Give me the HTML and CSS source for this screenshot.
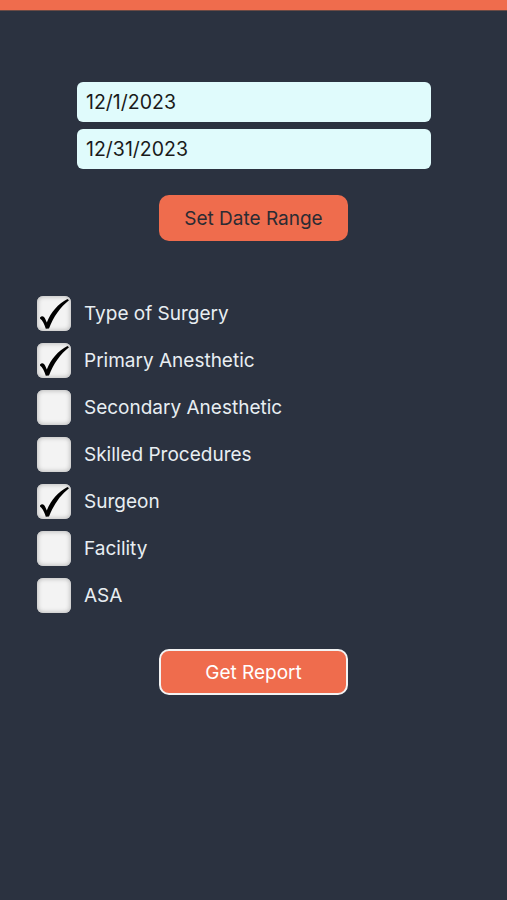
FILE: index.html
```html
<!DOCTYPE html>
<html lang="en">
<head>
    <meta charset="UTF-8">
    <title>Report</title>
    <meta name="viewport" content="width=device-width, initial-scale=1">
    <link rel="stylesheet" href="styles.css">
</head>
<body>
    <div class="topbar"></div>
    <div class="container">
        <div class="dates">
            <input type="text" class="date-input" value="12/1/2023">
            <input type="text" class="date-input" value="12/31/2023">
        </div>
        <button class="btn btn-range">Set Date Range</button>

        <div class="options">
            <label class="option"><span class="box"><svg class="tick" viewBox="0 0 34 34"><path d="M3 20.5C5 18.5 7 19 8.5 22.5L9.8 25.5C14 15 21 7 30.5 2L32 3.2C23.5 10 16.5 19.5 12 31.5L8.8 31.8C7.6 27.5 5.6 23.5 3 21.5Z"/></svg></span> Type of Surgery</label>
            <label class="option"><span class="box"><svg class="tick" viewBox="0 0 34 34"><path d="M3 20.5C5 18.5 7 19 8.5 22.5L9.8 25.5C14 15 21 7 30.5 2L32 3.2C23.5 10 16.5 19.5 12 31.5L8.8 31.8C7.6 27.5 5.6 23.5 3 21.5Z"/></svg></span> Primary Anesthetic</label>
            <label class="option"><span class="box"></span> Secondary Anesthetic</label>
            <label class="option"><span class="box"></span> Skilled Procedures</label>
            <label class="option"><span class="box"><svg class="tick" viewBox="0 0 34 34"><path d="M3 20.5C5 18.5 7 19 8.5 22.5L9.8 25.5C14 15 21 7 30.5 2L32 3.2C23.5 10 16.5 19.5 12 31.5L8.8 31.8C7.6 27.5 5.6 23.5 3 21.5Z"/></svg></span> Surgeon</label>
            <label class="option"><span class="box"></span> Facility</label>
            <label class="option"><span class="box"></span> ASA</label>
        </div>

        <button class="btn btn-report">Get Report</button>
    </div>
</body>
</html>
```

FILE: styles.css
```css
body {
    margin: 0;
    padding: 0;
    background-color: #2b3240;
    font-family: Inter, "Noto Sans", Arial, sans-serif;
    height: 900px;
}
.topbar {
    height: 10px;
    background: #ef6c4d;
    border-bottom: 1px solid #6b4a44;
}
.container {
    display: flex;
    flex-direction: column;
    padding-top: 71px;
}
.dates {
    display: flex;
    flex-direction: column;
    gap: 7px;
    margin: 0 76px 0 77px;
}
.date-input {
    height: 40px;
    box-sizing: border-box;
    border: none;
    border-radius: 6px;
    background: #e0fbfc;
    color: #1a1a1a;
    font-family: inherit;
    font-size: 19.5px;
    padding: 0 9px;
    outline: none;
}
.btn {
    display: block;
    width: 189px;
    height: 46px;
    margin: 0 auto;
    border-radius: 10px;
    background: #ef6c4d;
    font-family: inherit;
    font-size: 19px;
    cursor: pointer;
}
.btn-range {
    margin-top: 26px;
    border: none;
    color: #2b2b33;
}
.options {
    display: flex;
    flex-direction: column;
    gap: 12px;
    margin: 55px 0 0 37px;
}
.option {
    display: flex;
    align-items: center;
    gap: 13px;
    color: #e8eef2;
    font-size: 19px;
    height: 35px;
}
.box {
    width: 34px;
    height: 35px;
    box-sizing: border-box;
    border-radius: 6px;
    background: #f3f3f3;
    box-shadow: inset 0 0 4px 1px #bdbdbd;
    display: flex;
    align-items: center;
    justify-content: center;
}
.tick {
    width: 34px;
    height: 34px;
    fill: #000;
}
.btn-report {
    margin-top: 36px;
    border: 2px solid #f3f3f3;
    color: #fff;
}
```
